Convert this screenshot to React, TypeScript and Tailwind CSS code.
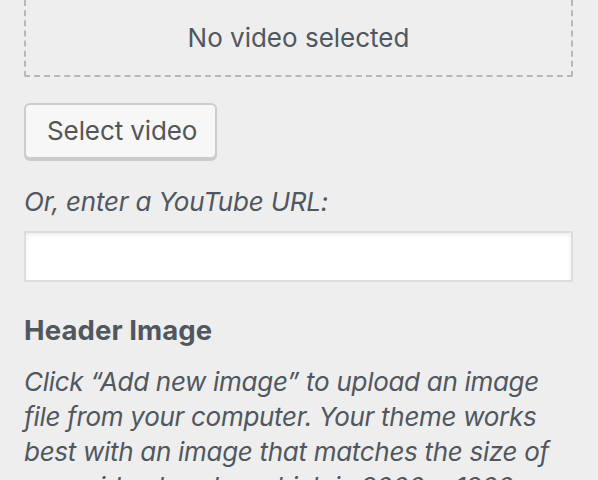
import React from "react";

export default function App() {
  return (
    <div
      className="w-[598px] h-[480px] overflow-hidden bg-[#eeeeee] text-[#50575e] pl-[24px] pr-[25px]"
      style={{ fontFamily: "Inter, 'Liberation Sans', sans-serif" }}
    >
      <div className="h-[77px] border-x-2 border-b-2 border-dashed border-[#b4b9be] rounded-b-[2px] flex items-center justify-center text-[26px] leading-[36px]">
        No video selected
      </div>
      <button className="mt-[26px] h-[56px] pl-[21px] pr-[18px] bg-[#f7f7f7] border-2 border-[#cccccc] rounded-[6px] shadow-[0_2px_0_#cccccc] text-[26px] leading-[36px] tracking-[-0.1px] text-[#555555] flex items-center">
        Select video
      </button>
      <div className="mt-[25px] italic text-[26px] leading-[36px] tracking-[-0.2px]">Or, enter a YouTube URL:</div>
      <input
        type="text"
        className="mt-[11px] block w-full h-[51px] bg-white border-2 border-[#dddddd] shadow-[inset_0_2px_4px_rgba(0,0,0,0.07)] outline-none"
      />
      <div className="mt-[30px] font-bold text-[27.5px] leading-[36px] tracking-[0.1px]">Header Image</div>
      <p className="mt-[16px] italic text-[26px] leading-[35px] tracking-[-0.3px]">
        Click “Add new image” to upload an image file from your computer. Your theme works best with an image that matches the size of your video header, which is 2000 × 1200 pixels.
      </p>
    </div>
  );
}
